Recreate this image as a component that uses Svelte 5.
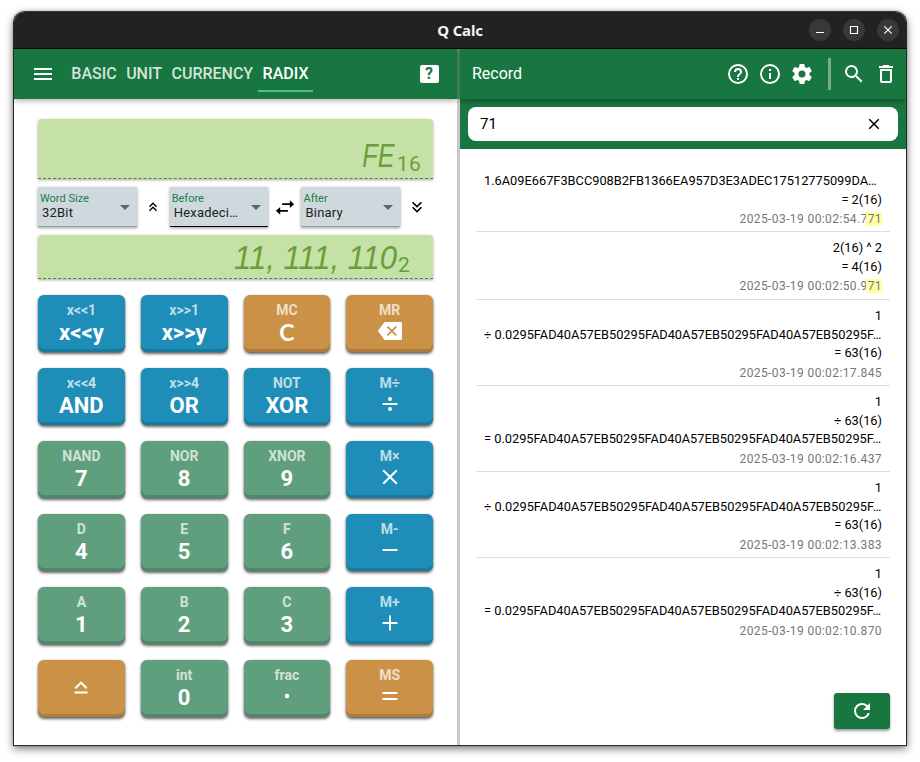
<script>
  const tabs = ['BASIC', 'UNIT', 'CURRENCY', 'RADIX'];
  const keys = [
    ['x<<1', 'x<<y', 'blue'], ['x>>1', 'x>>y', 'blue'], ['MC', 'C', 'gold', 'clear'], ['MR', '', 'gold', 'back'],
    ['x<<4', 'AND', 'blue'], ['x>>4', 'OR', 'blue'], ['NOT', 'XOR', 'blue'], ['M÷', '', 'blue', 'divide'],
    ['NAND', '7', 'green'], ['NOR', '8', 'green'], ['XNOR', '9', 'green'], ['M×', '', 'blue', 'times'],
    ['D', '4', 'green'], ['E', '5', 'green'], ['F', '6', 'green'], ['M-', '', 'blue', 'minus'],
    ['A', '1', 'green'], ['B', '2', 'green'], ['C', '3', 'green'], ['M+', '', 'blue', 'plus'],
    ['', '', 'gold', 'shift'], ['int', '0', 'green'], ['frac', '', 'green', 'dot'], ['MS', '', 'gold', 'equal']
  ];
  const rep = '0.0295FAD40A57EB50295FAD40A57EB50295FAD40A57EB50295F…';
  const records = [
    { lines: ['1.6A09E667F3BCC908B2FB1366EA957D3E3ADEC17512775099DA…', '= 2(16)'], time: '2025-03-19 00:02:54.7', hit: '71' },
    { lines: ['2(16) ^ 2', '= 4(16)'], time: '2025-03-19 00:02:50.9', hit: '71' },
    { lines: ['1', '÷ ' + rep, '= 63(16)'], time: '2025-03-19 00:02:17.845' },
    { lines: ['1', '÷ 63(16)', '= ' + rep], time: '2025-03-19 00:02:16.437' },
    { lines: ['1', '÷ ' + rep, '= 63(16)'], time: '2025-03-19 00:02:13.383' },
    { lines: ['1', '÷ 63(16)', '= ' + rep], time: '2025-03-19 00:02:10.870' }
  ];
</script>

{#snippet picker(label, value, active)}
  <div class="picker" class:active>
    <div class="ptext"><span class="plabel">{label}</span><span class="pvalue">{value}</span></div>
    <svg width="24" height="24" viewBox="0 0 24 24"><path d="M7 10l5 5 5-5z" fill="#5d666b" /></svg>
  </div>
{/snippet}

<div class="desktop">
<div class="window">
  <div class="titlebar">
    <div class="title">Q Calc</div>
    <div class="wbtns">
      <span><svg width="22" height="22"><path d="M7 13.5h8" /></svg></span>
      <span><svg width="22" height="22"><path d="M7.5 7.5h7v7h-7z" /></svg></span>
      <span><svg width="22" height="22"><path d="M7.3 7.3l7.4 7.4M14.7 7.3l-7.4 7.4" stroke-width="1.5" /></svg></span>
    </div>
  </div>
  <div class="body">
    <section class="calc">
      <header>
        <svg class="menu" width="24" height="24" viewBox="0 0 24 24"><path d="M3 6h18v2H3V6m0 5h18v2H3v-2m0 5h18v2H3v-2z" /></svg>
        <nav>
          {#each tabs as t}<span class="tab" class:on={t === 'RADIX'}>{t}</span>{/each}
        </nav>
        <span class="helpbox">?</span>
      </header>
      <div class="content">
        <div class="lcd top"><span class="seg">FE</span><sub>16</sub></div>
        <div class="pickers">
          {@render picker('Word Size', '32Bit', false)}
          <svg class="chev" width="16" height="16" viewBox="0 0 24 24"><path d="M7.41 18.41L6 17l6-6 6 6-1.41 1.41L12 13.83l-4.59 4.58m0-6L6 11l6-6 6 6-1.41 1.41L12 7.83l-4.59 4.58z" /></svg>
          {@render picker('Before', 'Hexadeci…', true)}
          <svg class="swap" width="24" height="23" viewBox="0 0 24 24"><path d="M21.500 8.500l-4.500-4v3h-8v2h8v3M7 11.500l-4.500 4 4.500 4v-3h8v-2H7v-3z" /></svg>
          {@render picker('After', 'Binary', false)}
          <svg class="chev2" width="20" height="20" viewBox="0 0 24 24"><path d="M16.59 5.59L18 7l-6 6-6-6 1.41-1.41L12 10.17l4.59-4.58m0 6L18 13l-6 6-6-6 1.41-1.41L12 16.17l4.59-4.58z" /></svg>
        </div>
        <div class="lcd bottom"><span class="seg bin">11, 111, 110</span><sub>2</sub></div>
        <div class="keys">
          {#each keys as [sub, main, color, icon]}
            <div class="key {color}">
              {#if sub}<span class="ksub">{sub}</span>{/if}
              <span class="kmain" class:word={main} class:clear={icon === 'clear'}>
                {#if main}{main}
                {:else if icon === 'back'}<svg width="26" height="20" viewBox="0 0 26 20"><path fill="#fff" d="M7.6 1H23.5a1.5 1.5 0 0 1 1.5 1.5v15a1.5 1.5 0 0 1-1.5 1.5H7.6L.8 10z" /><path d="M10.4 5.6l8.8 8.8M19.2 5.6l-8.8 8.8" stroke="#cb9247" stroke-width="1.8" /></svg>
                {:else}
                  <svg width="24" height="24" viewBox="0 0 24 24" stroke="#fff" stroke-width="2" fill="none">
                    {#if icon === 'divide'}<path d="M4.5 12h15" /><circle cx="12" cy="7" r="2" class="fill" /><circle cx="12" cy="17" r="2" class="fill" />
                    {:else if icon === 'times'}<path d="M5.2 5.2l13.6 13.6M18.8 5.2L5.2 18.8" />
                    {:else if icon === 'minus'}<path d="M4.5 12h15" />
                    {:else if icon === 'plus'}<path d="M4.5 12h15M12 4.5v15" />
                    {:else if icon === 'equal'}<path d="M4.5 9h15M4.5 15h15" />
                    {:else if icon === 'dot'}<circle cx="12" cy="12" r="2.2" class="fill" />
                    {:else}<path d="M6.3 12.2L12 6.6l5.7 5.6M5.5 16.5h13" stroke-width="2.1" />{/if}
                  </svg>
                {/if}
              </span>
            </div>
          {/each}
        </div>
      </div>
    </section>
    <div class="split"><div></div></div>
    <section class="record">
      <header>
        <span class="rtitle">Record</span>
        <svg width="24" height="24" viewBox="0 0 24 24"><path d="M11 18h2v-2h-2v2m1-16A10 10 0 0 0 2 12a10 10 0 0 0 10 10 10 10 0 0 0 10-10A10 10 0 0 0 12 2m0 18c-4.41 0-8-3.59-8-8s3.59-8 8-8 8 3.59 8 8-3.59 8-8 8m0-14a4 4 0 0 0-4 4h2a2 2 0 0 1 2-2 2 2 0 0 1 2 2c0 2-3 1.75-3 5h2c0-2.25 3-2.5 3-5a4 4 0 0 0-4-4z" /></svg>
        <svg width="24" height="24" viewBox="0 0 24 24"><path d="M11 9h2V7h-2m1 13c-4.41 0-8-3.59-8-8s3.59-8 8-8 8 3.59 8 8-3.59 8-8 8m0-18A10 10 0 0 0 2 12a10 10 0 0 0 10 10 10 10 0 0 0 10-10A10 10 0 0 0 12 2m-1 15h2v-6h-2v6z" /></svg>
        <svg width="24" height="24" viewBox="0 0 24 24"><path d="M12 15.5A3.5 3.5 0 0 1 8.500 12 3.500 3.500 0 0 1 12 8.500a3.500 3.500 0 0 1 3.500 3.500 3.500 3.500 0 0 1-3.500 3.500m7.430-2.530c.040-.320.070-.640.070-.970 0-.330-.030-.660-.070-1l2.110-1.630c.190-.150.240-.420.120-.640l-2-3.460c-.120-.220-.390-.310-.610-.220l-2.490 1c-.520-.390-1.060-.730-1.690-.980l-.370-2.650A.506.506 0 0 0 14 2h-4c-.250 0-.460.180-.500.420l-.370 2.650c-.630.250-1.170.590-1.690.980l-2.490-1c-.220-.090-.490 0-.610.220l-2 3.460c-.130.220-.070.490.120.640L4.570 11c-.040.340-.070.670-.070 1 0 .330.030.650.070.970l-2.110 1.660c-.190.150-.250.420-.120.640l2 3.460c.120.220.390.300.610.220l2.490-1.010c.520.400 1.060.740 1.690.990l.370 2.650c.040.240.250.420.500.420h4c.250 0 .460-.180.500-.420l.370-2.650c.630-.260 1.170-.590 1.690-.990l2.490 1.010c.220.080.490 0 .610-.220l2-3.460c.120-.220.070-.490-.120-.640l-2.110-1.660z" /></svg>
        <i class="bar"></i>
        <svg width="24" height="24" viewBox="0 0 24 24"><path d="M15.500 14h-.790l-.280-.270A6.471 6.471 0 0 0 16 9.500 6.500 6.500 0 1 0 9.500 16c1.610 0 3.090-.590 4.230-1.570l.270.280v.790l5 4.990L20.490 19l-4.990-5m-6 0C7.010 14 5 11.990 5 9.500S7.010 5 9.500 5 14 7.010 14 9.500 11.990 14 9.500 14z" /></svg>
        <svg width="24" height="24" viewBox="0 0 24 24"><path d="M6 19a2 2 0 0 0 2 2h8a2 2 0 0 0 2-2V7H6v12M8 9h8v10H8V9m7.500-5l-1-1h-5l-1 1H5v2h14V4h-3.500z" /></svg>
      </header>
      <div class="searchbar">
        <div class="search"><span>71</span><svg width="18" height="18" viewBox="0 0 24 24"><path d="M19 6.410L17.590 5 12 10.590 6.410 5 5 6.410 10.590 12 5 17.590 6.410 19 12 13.410 17.590 19 19 17.590 13.410 12 19 6.410z" /></svg></div>
      </div>
      <div class="list">
        {#each records as r}
          <article>
            {#each r.lines as l}<div class="line" class:long={l.length > 20}>{l}</div>{/each}
            <div class="time">{r.time}{#if r.hit}<mark>{r.hit}</mark>{/if}</div>
          </article>
        {/each}
      </div>
      <div class="foot">
        <div class="reload"><svg width="24" height="24" viewBox="0 0 24 24"><path d="M17.650 6.350A7.958 7.958 0 0 0 12 4a8 8 0 0 0-8 8 8 8 0 0 0 8 8c3.730 0 6.840-2.550 7.730-6h-2.080A5.990 5.990 0 0 1 12 18a6 6 0 0 1-6-6 6 6 0 0 1 6-6c1.660 0 3.140.690 4.220 1.780L13 11h7V4l-2.350 2.350z" /></svg></div>
      </div>
    </section>
  </div>
</div>
</div>

<style>
  :global(body) { background: #fff; font-family: Roboto, sans-serif; }
  * { box-sizing: border-box; }
  svg { display: block; flex: none; }
  .desktop { height: 762px; padding: 11px 13px 0; overflow: hidden; }
  .window { width: 894px; height: 735px; border: 1px solid #292929; border-top-color: #363636; border-radius: 12px 12px 0 0; overflow: hidden; background: #fff; box-shadow: 0 3px 8px rgba(0,0,0,.5), 0 0 3px rgba(0,0,0,.2); display: flex; flex-direction: column; }
  .titlebar { height: 37px; flex: none; background: #222; border-bottom: 1px solid #000; color: #f4f4f4; display: grid; grid-template-columns: 1fr auto 1fr; align-items: center; }
  .title { grid-column: 2; font: 700 15px "Noto Sans", sans-serif; letter-spacing: -.2px; }
  .wbtns { display: flex; gap: 12px; justify-content: flex-end; padding-right: 7px; }
  .wbtns span { width: 22px; height: 22px; border-radius: 50%; background: #383838; }
  .wbtns path { stroke: #fff; fill: none; stroke-width: 1.2; }
  .body { flex: 1; display: flex; min-height: 0; }
  .calc { width: 443px; flex: none; }
  header { height: 50px; background: #187640; color: #fff; display: flex; align-items: center; box-shadow: 0 2px 5px rgba(0,0,0,.3); position: relative; }
  header svg { fill: #fff; }
  .menu { margin-left: 17px; }
  nav { display: flex; gap: .7px; height: 50px; margin-left: 11.9px; }
  .tab { height: 43px; padding: 7px 4.4px 0; line-height: 35px; font-size: 16px; font-weight: 500; color: rgba(255,255,255,.82); border-bottom: 2px solid transparent; }
  .tab.on { color: #fff; border-color: #4ebd87; }
  .helpbox { margin-left: auto; margin-right: 18.500px; width: 19px; height: 18px; border-radius: 2px; background: #fff; color: #187640; font-weight: 700; font-size: 16px; line-height: 18px; text-align: center; }
  .content { padding: 20px 24px 0; }
  .lcd { background: #c5e1a5; border-radius: 4px 4px 0 0; border-bottom: 1px dashed #607d45; box-shadow: 0 1px 3px rgba(0,0,0,.35); display: flex; justify-content: flex-end; align-items: flex-end; color: #689f38; }
  .top { height: 60px; padding-right: 12px; }
  .bottom { height: 44px; padding-right: 23px; }
  .seg { font: italic 34px/34px "Liberation Sans", sans-serif; transform: scaleX(.74); transform-origin: right; margin: 0 2px 6px 0; }
  .bin { transform: scaleX(.91); margin: 0 1px 4px 0; white-space: pre; }
  sub { font-size: 21px; line-height: 24px; vertical-align: baseline; letter-spacing: .3px; }
  .top sub { margin-bottom: 2px; }
  .bottom sub { margin-bottom: 1px; }
  .pickers { height: 40px; margin: 8px 0; display: flex; align-items: center; }
  .picker { width: 98.8px; height: 40px; background: #cfd8dc; border-bottom: 1px solid #90a4ae; box-shadow: 0 1px 3px rgba(0,0,0,.4); display: flex; align-items: center; justify-content: space-between; flex: none; }
  .picker.active { border-bottom: 1px solid #000; }
  .ptext { display: flex; flex-direction: column; padding-left: 2px; }
  .plabel { font-size: 11px; line-height: 13px; color: #18804a; white-space: nowrap; }
  .pvalue { font-size: 13px; line-height: 16px; color: #222; padding-left: 2px; letter-spacing: .2px; white-space: nowrap; }
  .picker svg { margin-left: -4px; }
  .chev { margin: 0 8.500px 0 8.400px; }
  .swap { margin: 0 4.500px; }
  .chev2 { margin-left: 6.500px; }
  .keys { margin-top: 16px; display: grid; grid-template-columns: repeat(4, 1fr); gap: 16px; }
  .key { height: 57px; border-radius: 6px; color: #fff; display: flex; flex-direction: column; align-items: center; box-shadow: inset 0 -3px 0 rgba(0,0,0,.14), 0 2px 3px rgba(0,0,0,.6), 0 0 2px rgba(0,0,0,.2); }
  .blue { background: #1e8eb8; }
  .green { background: #5f9f7e; }
  .gold { background: #cb9247; }
  .ksub { margin-top: 6px; font-size: 14px; line-height: 18px; font-weight: 700; opacity: .7; }
  .kmain { font-size: 22px; line-height: 24px; height: 24px; font-weight: 700; margin-top: 1px; display: flex; align-items: center; }
  .kmain.word { margin-top: 2px; }
  .kmain svg { margin-top: -2px; }
  .key > .kmain:first-child { margin-top: 17px; }
  .kmain.clear { font-family: Lato, sans-serif; font-size: 23px; margin-top: 1px; }
  .fill { fill: #fff; stroke: none; }
  .split { width: 3px; background: #c8c8c8; flex: none; }
  .split div { height: 50px; background: #4b9569; }
  .record { flex: 1; min-width: 0; display: flex; flex-direction: column; }
  .record header { padding-right: 8px; flex: none; z-index: 1; }
  .rtitle { font-size: 16px; line-height: 18px; margin: 0 auto 0 12px; }
  .record header svg { margin-left: 8px; }
  .bar { width: 3px; height: 32px; background: rgba(255,255,255,.4); margin: 0 5px 0 14px; }
  .record header svg:nth-last-child(2) { margin-left: 6px; }
  .searchbar { height: 50px; padding: 8px; background: #187640; flex: none; }
  .search { height: 34px; border-radius: 8px; background: #fff; display: flex; align-items: center; justify-content: space-between; padding: 0 15px 0 12px; font-size: 15px; }
  .list { flex: 1; padding: 15px 16px 0; }
  article { min-height: 68px; padding: 7px 8px 3.500px; border-bottom: 1px solid #ddd; text-align: right; }
  article:first-child { padding: 8px 8px 2.500px; }
  article:last-child { border: 0; }
  .line { font-size: 12.800px; line-height: 18.500px; white-space: nowrap; color: #000; }
  .long { text-align: left; }
  .time { font-size: 12px; line-height: 18px; padding-top: 1px; letter-spacing: .4px; color: #777; }
  mark { background: #ffffa5; color: inherit; margin-left: -1.500px; padding-left: 1.500px; }
  .foot { display: flex; justify-content: flex-end; padding: 0 16px 16px; }
  .reload { width: 56px; height: 36px; border-radius: 3px; background: #187640; display: grid; place-items: center; box-shadow: 0 2px 3px rgba(0,0,0,.4); }
  .reload svg { fill: #fff; }
</style>
